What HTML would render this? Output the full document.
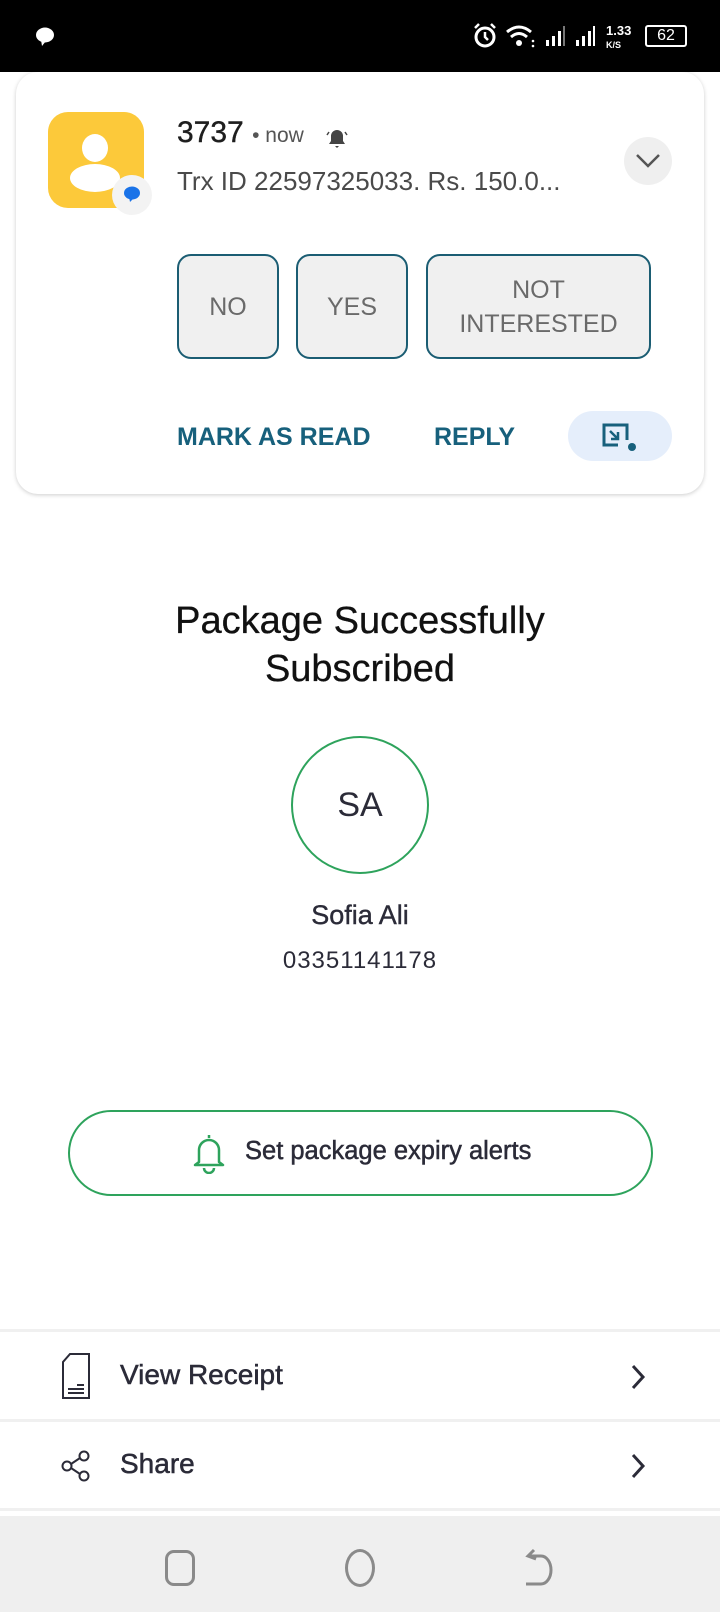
<!DOCTYPE html>
<html><head><meta charset="utf-8"><style>
*{margin:0;padding:0;box-sizing:border-box}
body{width:720px;height:1612px;background:#fff;font-family:"Liberation Sans",sans-serif;position:relative;overflow:hidden}
.a{position:absolute}
.btn{position:absolute;top:254px;height:105px;border:2px solid #1b5d73;border-radius:14px;background:#f0f0f0;color:#6a6a6a;font-size:25px;display:flex;align-items:center;justify-content:center;text-align:center;line-height:34px}
.act{position:absolute;top:423px;color:#17607c;font-size:25px;font-weight:bold}
.div{position:absolute;left:0;width:720px;height:3px;background:#f0f0f0}
.row{position:absolute;left:120px;font-size:28px;color:#2b2b38;-webkit-text-stroke:0.5px #2b2b38}
</style></head><body>
<div class="a" style="left:0;top:0;width:720px;height:72px;background:#000"></div>
<svg class="a" style="left:34px;top:26px" width="22" height="22" viewBox="0 0 22 22"><ellipse cx="11" cy="9" rx="9" ry="7.5" fill="#fff"/><path d="M7 14 L8 20 L12 15Z" fill="#fff"/></svg>
<svg class="a" style="left:472px;top:22px" width="26" height="28"><circle cx="13" cy="15" r="9" stroke="#fff" stroke-width="3" fill="none"/><path d="M13 10 V15 L16 18" stroke="#fff" stroke-width="2.5" fill="none"/><path d="M3 6 L7 2 M23 6 L19 2" stroke="#fff" stroke-width="2.5"/></svg>
<svg class="a" style="left:505px;top:24px" width="30" height="24" viewBox="0 0 30 24"><path d="M2 8 Q14 -2 26 8" stroke="#fff" stroke-width="3" fill="none"/><path d="M6 13 Q14 6 22 13" stroke="#fff" stroke-width="3" fill="none"/><circle cx="14" cy="19" r="3" fill="#fff"/><circle cx="28" cy="17" r="1.3" fill="#fff"/><circle cx="28" cy="22" r="1.3" fill="#fff"/></svg>
<svg class="a" style="left:544px;top:26px" width="60" height="20"><rect x="2" y="14" width="3" height="6" fill="#fff"/><rect x="8" y="10" width="3" height="10" fill="#fff"/><rect x="14" y="5" width="3" height="15" fill="#fff"/><rect x="19" y="0" width="2" height="20" fill="#777"/><rect x="32" y="14" width="3" height="6" fill="#fff"/><rect x="38" y="10" width="3" height="10" fill="#fff"/><rect x="44" y="5" width="3" height="15" fill="#fff"/><rect x="49" y="0" width="2" height="20" fill="#fff"/></svg>
<div class="a" style="left:606px;top:24px;color:#fff;font-size:13px;font-weight:bold;line-height:13px">1.33<br><span style="font-size:9px">K/S</span></div>
<div class="a" style="left:645px;top:25px;width:42px;height:22px;border:2px solid #fff;border-radius:3px;color:#fff;font-size:16px;text-align:center;line-height:18px">62</div>

<div class="a" style="left:16px;top:72px;width:688px;height:422px;border-radius:22px;background:#fff;box-shadow:0 1px 4px rgba(0,0,0,.2)"></div>
<div class="a" style="left:48px;top:112px;width:96px;height:96px;border-radius:20px;background:#fcc93a"></div>
<svg class="a" style="left:48px;top:112px" width="96" height="96"><ellipse cx="47" cy="36" rx="13" ry="14" fill="#fff"/><ellipse cx="47" cy="66" rx="25" ry="14" fill="#fff"/></svg>
<div class="a" style="left:112px;top:175px;width:40px;height:40px;border-radius:50%;background:#f3f3f3"></div>
<svg class="a" style="left:122px;top:185px" width="20" height="20"><ellipse cx="10" cy="8" rx="8" ry="6.5" fill="#1a73e8"/><path d="M7 12 L8 17 L12 13Z" fill="#1a73e8"/></svg>
<div class="a" style="left:177px;top:116px;font-size:30px;color:#1e1e1e;-webkit-text-stroke:0.4px #1e1e1e">3737 <span style="font-size:21px;color:#555;-webkit-text-stroke:0">• now</span></div>
<svg class="a" style="left:326px;top:127px" width="22" height="22"><path d="M11 3 A6 6 0 0 1 17 9 V14 L19 17 H3 L5 14 V9 A6 6 0 0 1 11 3Z M9 19 H13 L11 21Z" fill="#444"/><path d="M3 5 L1 8 M19 5 L21 8" stroke="#444" stroke-width="1.5"/></svg>
<div class="a" style="left:177px;top:166px;font-size:26px;color:#4a4a4a">Trx ID 22597325033. Rs. 150.0...</div>
<div class="a" style="left:624px;top:137px;width:48px;height:48px;border-radius:50%;background:#efefef"></div>
<svg class="a" style="left:634px;top:150px" width="28" height="20"><path d="M3 5 L14 16 L25 5" stroke="#555" stroke-width="2.5" fill="none"/></svg>

<div class="btn" style="left:177px;width:102px">NO</div>
<div class="btn" style="left:296px;width:112px">YES</div>
<div class="btn" style="left:426px;width:225px">NOT<br>INTERESTED</div>
<div class="act" style="left:177px">MARK AS READ</div>
<div class="act" style="left:434px">REPLY</div>
<div class="a" style="left:568px;top:411px;width:104px;height:50px;border-radius:25px;background:#e5eefb"></div>
<svg class="a" style="left:600px;top:420px" width="40" height="32"><path d="M27 20 V5 H4 V25 H18" stroke="#17607c" stroke-width="3" fill="none"/><path d="M10 11 L18 19 M18 12 V19 H11" stroke="#17607c" stroke-width="2.5" fill="none"/><circle cx="32" cy="27" r="4" fill="#17607c"/></svg>

<div class="a" style="left:0;width:720px;top:597px;text-align:center;font-size:38px;line-height:48px;color:#111;-webkit-text-stroke:0.3px #111">Package Successfully<br>Subscribed</div>
<div class="a" style="left:291px;top:736px;width:138px;height:138px;border:2px solid #2ea35c;border-radius:50%;text-align:center;line-height:134px;font-size:34px;color:#2b2b38">SA</div>
<div class="a" style="left:0;width:720px;top:900px;text-align:center;font-size:27px;color:#2b2b38;-webkit-text-stroke:0.4px #2b2b38">Sofia Ali</div>
<div class="a" style="left:0;width:720px;top:947px;text-align:center;font-size:24px;color:#2b2b38;letter-spacing:1px">03351141178</div>

<div class="a" style="left:68px;top:1110px;width:585px;height:86px;border:2px solid #2ea35c;border-radius:43px"></div>
<svg class="a" style="left:191px;top:1132px" width="36" height="42"><path d="M18 3 V6 M8 30 V18 A10 10 0 0 1 28 18 V30 L32 33 H4 Z" stroke="#2ea35c" stroke-width="2.5" fill="none" stroke-linejoin="round"/><path d="M13 36 A5 5 0 0 0 23 36" stroke="#2ea35c" stroke-width="2.5" fill="none"/></svg>
<div class="a" style="left:245px;top:1137px;font-size:25.5px;color:#2b2b38;-webkit-text-stroke:0.5px #2b2b38">Set package expiry alerts</div>

<div class="div" style="top:1329px"></div>
<div class="div" style="top:1419px"></div>
<div class="div" style="top:1508px"></div>
<svg class="a" style="left:60px;top:1352px" width="32" height="48"><path d="M10 2 H29 V46 H3 V10 Z" stroke="#2b2b38" stroke-width="2" fill="none"/><path d="M8 37 H24 M8 41 H24 M17 33 H24" stroke="#2b2b38" stroke-width="2"/></svg>
<div class="row" style="top:1359px">View Receipt</div>
<svg class="a" style="left:60px;top:1450px" width="32" height="32"><circle cx="24" cy="6" r="4.5" stroke="#2b2b38" stroke-width="2" fill="none"/><circle cx="7" cy="16" r="4.5" stroke="#2b2b38" stroke-width="2" fill="none"/><circle cx="24" cy="26" r="4.5" stroke="#2b2b38" stroke-width="2" fill="none"/><path d="M11 14 L20 8 M11 18 L20 24" stroke="#2b2b38" stroke-width="2"/></svg>
<div class="row" style="top:1448px">Share</div>
<svg class="a" style="left:628px;top:1362px" width="20" height="30"><path d="M5 4 L15 15 L5 26" stroke="#2b2b38" stroke-width="3" fill="none"/></svg>
<svg class="a" style="left:628px;top:1451px" width="20" height="30"><path d="M5 4 L15 15 L5 26" stroke="#2b2b38" stroke-width="3" fill="none"/></svg>

<div class="a" style="left:0;top:1516px;width:720px;height:96px;background:#efefef"></div>
<div class="a" style="left:165px;top:1550px;width:30px;height:36px;border:3px solid #8a8a8a;border-radius:9px"></div>
<div class="a" style="left:345px;top:1549px;width:30px;height:38px;border:3px solid #8a8a8a;border-radius:50%"></div>
<svg class="a" style="left:522px;top:1546px" width="34" height="42"><path d="M12 4 L6 10 L14 13" stroke="#8a8a8a" stroke-width="3" fill="none"/><path d="M7 10 H19 A10 14 0 0 1 19 38 H4" stroke="#8a8a8a" stroke-width="3" fill="none"/></svg>
</body></html>
